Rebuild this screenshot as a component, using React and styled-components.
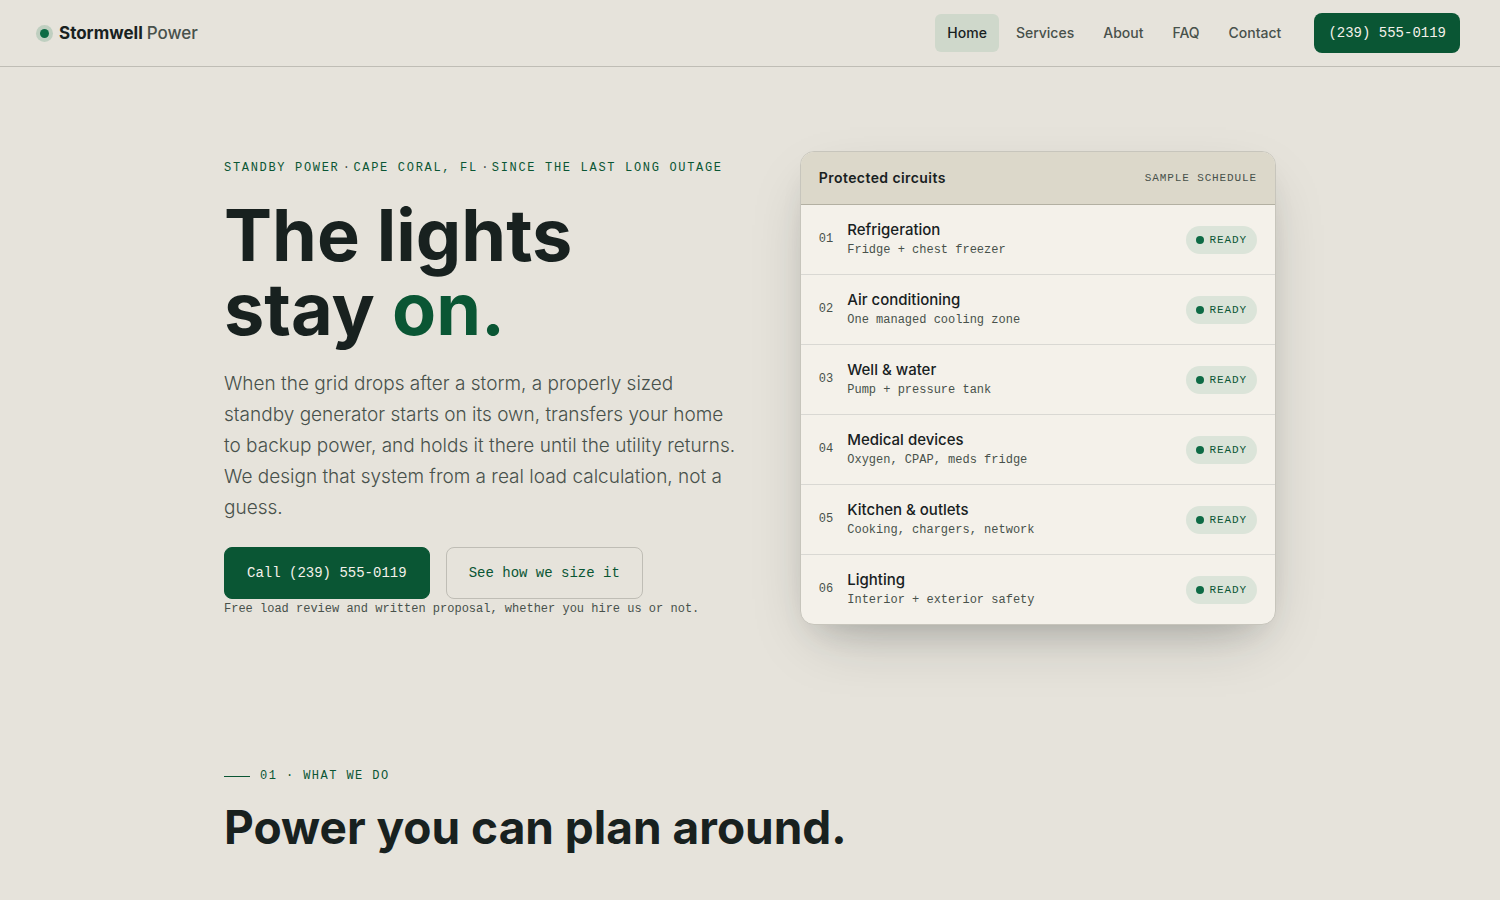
import React from 'react';
import styled, { createGlobalStyle } from 'styled-components';

const sans = "Inter, 'Liberation Sans', sans-serif";
const mono = "'Liberation Mono', monospace";

const GlobalStyle = createGlobalStyle`
	* {
		box-sizing: border-box;
	}
	body {
		margin: 0;
		background: #e6e3db;
		color: #18211f;
		font-family: ${sans};
	}
	h1, h2, h3, p, ol {
		margin: 0;
		padding: 0;
	}
`;

const Header = styled.header`
	display: flex;
	align-items: center;
	justify-content: space-between;
	padding: 13px 40px;
	border-bottom: 1px solid #bfbdb5;
`;

const Brand = styled.a`
	display: flex;
	align-items: center;
	gap: 10px;
	color: #18211f;
	font-size: 17px;
	font-weight: 700;
	line-height: 24px;
	text-decoration: none;

	span {
		color: #48514b;
		font-weight: 500;
	}
`;

const BrandDot = styled.i`
	width: 9px;
	height: 9px;
	border-radius: 50%;
	background: #0d6b45;
	box-shadow: 0 0 0 4px #bfcfc0;
`;

const Nav = styled.nav`
	display: flex;
	align-items: center;
	gap: 5px;
`;

const NavLink = styled.a`
	padding: 9px 12px;
	border-radius: 6px;
	background: ${(props) => (props.$active ? '#cfd8cb' : 'transparent')};
	color: ${(props) => (props.$active ? '#18211f' : '#48514b')};
	font-size: 14px;
	font-weight: 500;
	line-height: 20px;
	text-decoration: none;
`;

const PhoneLink = styled.a`
	margin-left: 16px;
	padding: 10px 14px;
	border-radius: 8px;
	background: #0a5634;
	color: #f4f1ea;
	font-family: ${mono};
	font-size: 14px;
	line-height: 20px;
	text-decoration: none;
`;

const Container = styled.div`
	max-width: 1052px;
	margin: 0 auto;
`;

const Hero = styled(Container)`
	display: grid;
	grid-template-columns: 1.075fr 1fr;
	align-items: center;
	gap: 64px;
	padding: 84px 0;
`;

const Eyebrow = styled.p`
	display: flex;
	gap: 2px;
	margin-bottom: 20px;
	color: #0a5634;
	font-family: ${mono};
	font-size: 12px;
	letter-spacing: 0.14em;
	line-height: 20px;
	white-space: nowrap;

	i {
		width: 10px;
		color: #48514b;
		font-style: normal;
		letter-spacing: 0;
		text-align: center;
	}
`;

const Title = styled.h1`
	font-size: 72px;
	font-weight: 700;
	line-height: 74px;

	em {
		color: #0a5634;
		font-style: normal;
	}
`;

const Lead = styled.p`
	margin-top: 22px;
	color: #48514b;
	font-size: 19px;
	font-weight: 300;
	line-height: 31px;
	white-space: nowrap;
`;

const Actions = styled.div`
	display: flex;
	gap: 16px;
	margin-top: 24px;
`;

const ActionLink = styled.a`
	padding: 15px 22px;
	border: 1px solid ${(props) => (props.$primary ? '#0a5634' : '#bfbdb5')};
	border-radius: 8px;
	background: ${(props) => (props.$primary ? '#0a5634' : 'transparent')};
	color: ${(props) => (props.$primary ? '#f4f1ea' : '#0a5634')};
	font-family: ${mono};
	font-size: 14px;
	line-height: 20px;
	text-decoration: none;
	white-space: nowrap;
`;

const Note = styled.p`
	color: #48514b;
	font-family: ${mono};
	font-size: 12px;
	line-height: 20px;
`;

const Panel = styled.section`
	overflow: hidden;
	border: 1px solid #c7c5bc;
	border-radius: 14px;
	background: #f4f1ea;
	box-shadow: 0 24px 60px -20px rgba(24, 33, 31, 0.28), 0 16px 32px -16px rgba(24, 33, 31, 0.16);
`;

const PanelHead = styled.div`
	display: flex;
	align-items: center;
	justify-content: space-between;
	padding: 16px 18px;
	border-bottom: 1px solid #b3b0a2;
	background: #dcd8ca;

	h2 {
		font-size: 14px;
		font-weight: 600;
		letter-spacing: 0.03em;
		line-height: 20px;
	}
	span {
		color: #48514b;
		font-family: ${mono};
		font-size: 11px;
		letter-spacing: 0.08em;
	}
`;

const CircuitList = styled.ol`
	list-style: none;
`;

const CircuitRow = styled.li`
	display: flex;
	align-items: center;
	gap: 14px;
	padding: 14px 18px;

	& + & {
		border-top: 1px solid #d9d8d3;
	}
`;

const CircuitNumber = styled.span`
	color: #48514b;
	font-family: ${mono};
	font-size: 12px;
	line-height: 19px;
`;

const CircuitText = styled.div`
	flex: 1;

	h3 {
		font-size: 15px;
		font-weight: 500;
		line-height: 22px;
	}
	p {
		color: #48514b;
		font-family: ${mono};
		font-size: 12px;
		line-height: 19px;
	}
`;

const Status = styled.span`
	display: flex;
	align-items: center;
	gap: 6px;
	padding: 4px 10px;
	border-radius: 14px;
	background: #dbe4d9;
	color: #0a5634;
	font-family: ${mono};
	font-size: 11px;
	letter-spacing: 0.08em;
	line-height: 20px;

	&::before {
		content: '';
		width: 8px;
		height: 8px;
		border-radius: 50%;
		background: #0d6b45;
	}
`;

const Services = styled(Container)`
	padding: 57px 0 84px;
`;

const SectionLabel = styled.p`
	display: flex;
	align-items: center;
	gap: 10px;
	margin-bottom: 16px;
	color: #0a5634;
	font-family: ${mono};
	font-size: 12px;
	letter-spacing: 0.12em;
	line-height: 20px;

	&::before {
		content: '';
		width: 26px;
		height: 1px;
		background: #0a5634;
	}
`;

const SectionTitle = styled.h2`
	font-size: 46px;
	font-weight: 700;
	line-height: 50px;
`;

const links = ['Home', 'Services', 'About', 'FAQ', 'Contact'];

const circuits = [
	{ name: 'Refrigeration', detail: 'Fridge + chest freezer' },
	{ name: 'Air conditioning', detail: 'One managed cooling zone' },
	{ name: 'Well & water', detail: 'Pump + pressure tank' },
	{ name: 'Medical devices', detail: 'Oxygen, CPAP, meds fridge' },
	{ name: 'Kitchen & outlets', detail: 'Cooking, chargers, network' },
	{ name: 'Lighting', detail: 'Interior + exterior safety' },
];

export default function App() {
	return (
		<>
			<GlobalStyle />
			<Header>
				<Brand href='#home'>
					<BrandDot />
					<div>
						Stormwell <span>Power</span>
					</div>
				</Brand>
				<Nav>
					{links.map((link) => (
						<NavLink key={link} href={'#' + link.toLowerCase()} $active={link === 'Home'}>
							{link}
						</NavLink>
					))}
					<PhoneLink href='tel:+12395550119'>(239) 555-0119</PhoneLink>
				</Nav>
			</Header>
			<main>
				<Hero id='home'>
					<div>
						<Eyebrow>
							<span>STANDBY POWER</span>
							<i>·</i>
							<span>CAPE CORAL, FL</span>
							<i>·</i>
							<span>SINCE THE LAST LONG OUTAGE</span>
						</Eyebrow>
						<Title>
							The lights
							<br />
							stay <em>on.</em>
						</Title>
						<Lead>
							When the grid drops after a storm, a properly sized
							<br />
							standby generator starts on its own, transfers your home
							<br />
							to backup power, and holds it there until the utility returns.
							<br />
							We design that system from a real load calculation, not a
							<br />
							guess.
						</Lead>
						<Actions>
							<ActionLink href='tel:+12395550119' $primary>
								Call (239) 555-0119
							</ActionLink>
							<ActionLink href='#services'>See how we size it</ActionLink>
						</Actions>
						<Note>Free load review and written proposal, whether you hire us or not.</Note>
					</div>
					<Panel>
						<PanelHead>
							<h2>Protected circuits</h2>
							<span>SAMPLE SCHEDULE</span>
						</PanelHead>
						<CircuitList>
							{circuits.map((circuit, index) => (
								<CircuitRow key={circuit.name}>
									<CircuitNumber>{'0' + (index + 1)}</CircuitNumber>
									<CircuitText>
										<h3>{circuit.name}</h3>
										<p>{circuit.detail}</p>
									</CircuitText>
									<Status>READY</Status>
								</CircuitRow>
							))}
						</CircuitList>
					</Panel>
				</Hero>
				<Services id='services'>
					<SectionLabel>01 · WHAT WE DO</SectionLabel>
					<SectionTitle>Power you can plan around.</SectionTitle>
				</Services>
			</main>
		</>
	);
}
